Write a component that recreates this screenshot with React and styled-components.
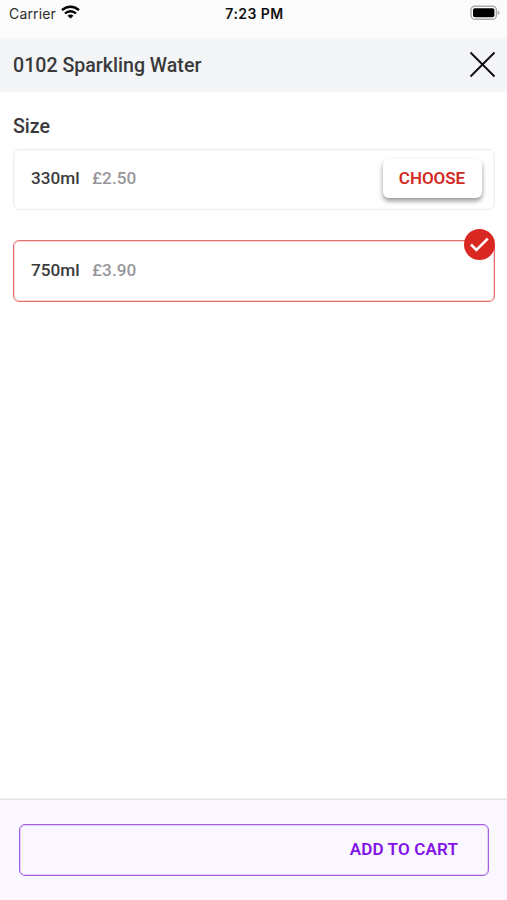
import { useState } from "react";
import styled, { createGlobalStyle } from "styled-components";

const GlobalStyle = createGlobalStyle`
  * {
    box-sizing: border-box;
  }
  body {
    margin: 0;
    background-color: #fff;
    font-family: Roboto, sans-serif;
  }
`;

const Container = styled.div`
  height: 900px;
  display: flex;
  flex-direction: column;
  background-color: #fff;
  overflow: hidden;
`;

const StatusBar = styled.div`
  height: 38px;
  padding: 5px 7px 0 9px;
  display: grid;
  grid-template-columns: 1fr auto 1fr;
  align-items: start;
  background-color: #fbfbfb;
  color: #111;
  font-family: Inter, sans-serif;
  font-size: 14px;
  line-height: 18px;
`;

const Carrier = styled.div`
  display: flex;
  gap: 5px;
  letter-spacing: 0.15px;
  color: #2b2b2b;
`;

const Time = styled.div`
  font-weight: 600;
  letter-spacing: 0.45px;
`;

const Battery = styled.div`
  display: flex;
  justify-content: flex-end;
`;

const Header = styled.header`
  height: 54px;
  padding: 0 11px 1px 13px;
  display: flex;
  align-items: center;
  justify-content: space-between;
  background-color: #f3f5f6;
`;

const Title = styled.h1`
  margin: 0;
  padding-top: 2px;
  font-size: 19.6px;
  font-weight: 500;
  line-height: 24px;
  color: #3a3a3c;
`;

const CloseButton = styled.button`
  display: flex;
  padding: 0;
  border: none;
  background: none;
  cursor: pointer;
`;

const Content = styled.main`
  flex: 1;
  padding: 23px 12px 0 13px;
`;

const SectionTitle = styled.h2`
  margin: 0 0 10px;
  font-size: 19.6px;
  font-weight: 500;
  line-height: 24px;
  color: #3a3a3c;
`;

const Options = styled.div`
  display: flex;
  flex-direction: column;
  gap: 30px;
`;

const Option = styled.div`
  position: relative;
  height: ${(props) => (props.$selected ? "62px" : "61px")};
  padding: 0 12px 3px 17px;
  display: flex;
  align-items: center;
  border: ${(props) =>
    props.$selected ? "1px solid #e2706c" : "1px solid #eeeeef"};
  box-shadow: ${(props) =>
    props.$selected ? "inset 0 0 0 1px #f9d5d3" : "inset 0 0 0 1px #fafafa"};
  border-radius: 6px;
`;

const Name = styled.span`
  width: 61px;
  font-size: 17.2px;
  font-weight: 500;
  color: #3a3a3c;
`;

const Price = styled.span`
  font-size: 17.2px;
  font-weight: 500;
  color: #97979b;
`;

const ChooseButton = styled.button`
  width: 99px;
  height: 39px;
  margin-left: auto;
  padding: 0 1px 0 0;
  border: none;
  border-radius: 6px;
  background-color: #fff;
  box-shadow: 0 3px 5px rgba(0, 0, 0, 0.42);
  color: #d32a25;
  font-family: inherit;
  font-size: 17px;
  font-weight: 600;
  letter-spacing: -0.05px;
  cursor: pointer;
`;

const Badge = styled.div`
  position: absolute;
  top: -12px;
  right: -1px;
  width: 31px;
  height: 31px;
  display: flex;
  align-items: center;
  justify-content: center;
  border-radius: 50%;
  background-color: #d92822;
`;

const Footer = styled.footer`
  height: 100px;
  padding: 24px 18px 0 19px;
  background-color: #faf7fe;
  box-shadow: 0 -1px 2px rgba(0, 0, 0, 0.16);
`;

const CartButton = styled.button`
  width: 100%;
  height: 52px;
  padding: 0 30px 2px;
  border: 1px solid #a55ce0;
  box-shadow: inset 0 0 0 1px #e3cff8;
  border-radius: 6px;
  background: none;
  color: #8212e6;
  text-align: right;
  font-family: inherit;
  font-size: 17px;
  font-weight: 600;
  letter-spacing: 0.15px;
  cursor: pointer;
`;

const sizes = [
  { name: "330ml", price: "£2.50" },
  { name: "750ml", price: "£3.90" },
];

const WifiIcon = () => (
  <svg width="19" height="14" viewBox="0 0 19 14">
    <g fill="none" stroke="#000" strokeWidth="2.4">
      <path d="M1 5.2C5.8 0.6 13.2 0.6 18 5.2" />
      <path d="M4 8.5C7.1 5.5 11.9 5.5 15 8.5" />
    </g>
    <path d="M9.5 13.6L6.5 10.7C8.2 9.2 10.8 9.2 12.5 10.7Z" />
  </svg>
);

const BatteryIcon = () => (
  <svg width="30" height="16" viewBox="0 0 30 16">
    <rect x="1" y="1.2" width="25.4" height="13" rx="3.8" fill="#fff" stroke="#a9a9a9" strokeWidth="1.4" />
    <rect x="3" y="3.2" width="21.4" height="9" rx="1.8" />
    <path d="M27.8 5.4C30 6.4 30 9 27.8 10Z" fill="#a9a9a9" />
  </svg>
);

const App = () => {
  const [selected, setSelected] = useState("750ml");

  return (
    <Container>
      <GlobalStyle />
      <StatusBar>
        <Carrier>
          Carrier
          <WifiIcon />
        </Carrier>
        <Time>7:23 PM</Time>
        <Battery>
          <BatteryIcon />
        </Battery>
      </StatusBar>
      <Header>
        <Title>0102 Sparkling Water</Title>
        <CloseButton aria-label="Close">
          <svg width="27" height="27" viewBox="0 0 27 27">
            <path d="M1.5 1.5L25.5 25.5M25.5 1.5L1.5 25.5" stroke="#0c0c10" strokeWidth="1.9" />
          </svg>
        </CloseButton>
      </Header>
      <Content>
        <SectionTitle>Size</SectionTitle>
        <Options>
          {sizes.map((size) => (
            <Option key={size.name} $selected={size.name === selected}>
              <Name>{size.name}</Name>
              <Price>{size.price}</Price>
              {size.name === selected ? (
                <Badge>
                  <svg width="21" height="17" viewBox="0 0 21 17">
                    <path d="M2 8.5L7.4 14L18.8 2.6" fill="none" stroke="#fff" strokeWidth="2.5" />
                  </svg>
                </Badge>
              ) : (
                <ChooseButton onClick={() => setSelected(size.name)}>
                  CHOOSE
                </ChooseButton>
              )}
            </Option>
          ))}
        </Options>
      </Content>
      <Footer>
        <CartButton>ADD TO CART</CartButton>
      </Footer>
    </Container>
  );
};

export default App;
